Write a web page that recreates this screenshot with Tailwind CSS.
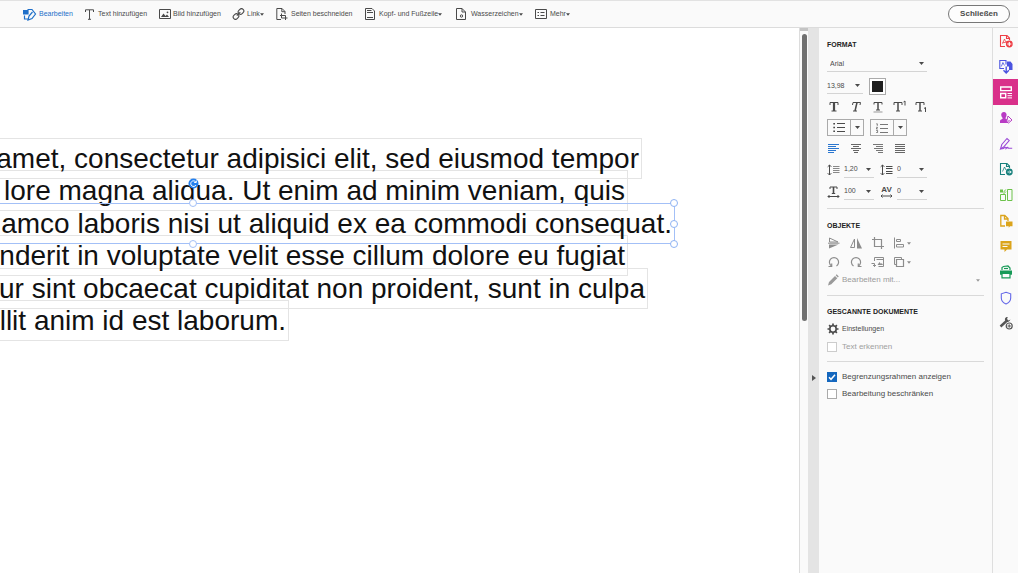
<!DOCTYPE html>
<html lang="de">
<head>
    <meta charset="UTF-8">
    <title>PDF bearbeiten</title>
    <script src="https://cdn.jsdelivr.net/npm/@tailwindcss/browser@4"></script>
</head>
<body class="h-screen flex flex-col overflow-hidden bg-white text-[#4a4a4a] font-['Liberation_Sans',Arial,sans-serif]">
<!-- Shared glyphs -->
<svg class="hidden">
    <symbol id="caret" viewBox="0 0 5 3"><path d="M0 0h5L2.500 3z" fill="currentColor"/></symbol>
</svg>

<!-- Toolbar -->
<header class="h-7 shrink-0 flex items-center justify-between bg-[#fafafa] border-t border-b border-t-[#e2e2e2] border-b-[#dcdcdc] pl-[23px] pr-2">
    <nav class="flex items-center text-[7px] leading-3 whitespace-nowrap">
        <button class="flex items-center gap-[2px] w-[62px] text-[#1f6fc9]">
            <svg class="w-[14px] h-[13px]" viewBox="0 0 14 13" fill="none" stroke="currentColor" stroke-width="1.200"><path d="M4.500 1.500H9l3.500 4.500L9 10.500 5 12l1-4 3.500-4M1.500 7.500v3.500H5"/><path d="M.5 2.500h4.500v3.500H.5z" fill="currentColor"/></svg>
            Bearbeiten
        </button>
        <button class="flex items-center gap-1 w-[74px]">
            <svg class="w-[9px] h-[11px]" viewBox="0 0 9 11" fill="none" stroke="currentColor"><path d="M.5 3V.8h8V3M4.500 1v9M3 10.300h3"/></svg>
            Text hinzufügen
        </button>
        <button class="flex items-center gap-[2px] w-[73px]">
            <svg class="w-3 h-[10px]" viewBox="0 0 12 10" fill="none" stroke="currentColor"><path d="M.5.5h11v9H.5z"/><path d="M2 8l2.500-3.500L6.500 7l1.500-1.500L10 8z" fill="currentColor" stroke="none"/><circle cx="8.500" cy="3.300" r=".9" fill="currentColor" stroke="none"/></svg>
            Bild hinzufügen
        </button>
        <button class="flex items-center gap-[2px] w-11">
            <svg class="w-[13px] h-3" viewBox="0 0 13 12" fill="none" stroke="currentColor" stroke-width="1.100"><rect x="6" y="1.200" width="6" height="4.600" rx="2.300" transform="rotate(-45 9 3.500)"/><rect x="1" y="6.200" width="6" height="4.600" rx="2.300" transform="rotate(-45 4 8.500)"/><path d="M4.800 7.700l3.500-3.500"/></svg>
            <span class="flex items-center">Link<svg class="w-1 h-[3px]"><use href="#caret"/></svg></span>
        </button>
        <button class="flex items-center gap-[3px] w-[89px]">
            <svg class="w-3 h-3" viewBox="0 0 12 12" fill="none" stroke="currentColor"><path d="M5 11.500H.8V.5H6L9 3.500V6M5.800.5v3.200H9M5.500 5.500v4.500h6M4 7.500h5.500V12"/></svg>
            Seiten beschneiden
        </button>
        <button class="flex items-center gap-1 w-[91px]">
            <svg class="w-[10px] h-3" viewBox="0 0 10 12" fill="none" stroke="currentColor"><path d="M.5.5H7L9.500 3v8.500h-9z"/><path d="M2 2.500h4.500M2 4.500h6M2 9.500h6"/></svg>
            <span class="flex items-center">Kopf- und Fußzeile<svg class="w-1 h-[3px]"><use href="#caret"/></svg></span>
        </button>
        <button class="flex items-center gap-[5px] w-[79px]">
            <svg class="w-[10px] h-3" viewBox="0 0 10 12" fill="none" stroke="currentColor"><path d="M.5.5H6L9.500 4v7.500h-9zM6 .5V4h3.500"/><circle cx="5.500" cy="8" r="1.200"/></svg>
            <span class="flex items-center">Wasserzeichen<svg class="w-1 h-[3px]"><use href="#caret"/></svg></span>
        </button>
        <button class="flex items-center gap-[3px]">
            <svg class="w-3 h-[10px]" viewBox="0 0 12 10" fill="none" stroke="currentColor"><path d="M.5.5h11v9H.5z"/><path d="M2.500 3.500H4M5.500 3.500h4M2.500 6.500H4M5.500 6.500h4"/></svg>
            <span class="flex items-center">Mehr<svg class="w-1 h-[3px]"><use href="#caret"/></svg></span>
        </button>
    </nav>
    <button class="h-[18px] w-[62px] rounded-full border border-[#777] bg-[#fdfdfd] text-[8px] leading-3 font-bold">Schließen</button>
</header>

<div class="flex-1 min-h-0 flex">
    <!-- Document page -->
    <main class="flex-1 min-w-0 overflow-hidden pt-[110px] text-[28px] leading-[39px] text-[#111] whitespace-nowrap">
        <p class="flex justify-end w-[642px] h-[41px] pr-[2px] border border-l-0 border-[#e4e4e4]"><span>amet, consectetur adipisici elit, sed eiusmod tempor</span></p>
        <p class="flex justify-end w-[628px] h-[41px] pr-[2px] -mt-[9px] border border-l-0 border-[#e4e4e4]"><span>lore magna aliqua. Ut enim ad minim veniam, quis</span></p>
        <div class="relative w-[675px] h-[41px] -mt-2 border border-l-0 border-[#a3c0f7]">
            <p class="flex justify-end pr-[2px]"><span>amco laboris nisi ut aliquid ex ea commodi consequat.</span></p>
            <span class="absolute left-[193px] -top-[17px] w-px h-[14px] bg-[#3b82e8]"></span>
            <svg class="absolute left-[188px] -top-[26px] w-[11px] h-[11px]" viewBox="0 0 11 11"><circle cx="5.500" cy="5.500" r="5" fill="#2580ee"/><path d="M7.800 4A2.800 2.800 0 1 0 8 7M8.300 2.500v2H6.200" fill="none" stroke="#fff"/></svg>
            <span class="absolute left-[189px] -top-[5px] w-2 h-2 rounded-full border border-[#a3c0f7] bg-white"></span>
            <span class="absolute left-[189px] -bottom-[5px] w-2 h-2 rounded-full border border-[#a3c0f7] bg-white"></span>
            <span class="absolute -right-[4px] -top-[5px] w-2 h-2 rounded-full border border-[#8fb3f3] bg-white"></span>
            <span class="absolute -right-[4px] top-4 w-2 h-2 rounded-full border border-[#8fb3f3] bg-white"></span>
            <span class="absolute -right-[4px] -bottom-[5px] w-2 h-2 rounded-full border border-[#8fb3f3] bg-white"></span>
        </div>
        <p class="flex justify-end w-[628px] h-[41px] pr-[2px] -mt-[9px] border border-l-0 border-[#e4e4e4]"><span>nderit in voluptate velit esse cillum dolore eu fugiat</span></p>
        <p class="flex justify-end w-[648px] h-[41px] pr-[2px] -mt-2 border border-l-0 border-[#e4e4e4]"><span>ur sint obcaecat cupiditat non proident, sunt in culpa</span></p>
        <p class="flex justify-end w-[289px] h-[41px] pr-[2px] -mt-[9px] border border-l-0 border-[#e4e4e4]"><span>llit anim id est laborum.</span></p>
    </main>

    <!-- Scrollbar and panel handle -->
    <div class="w-[9px] shrink-0 flex flex-col items-center bg-[#fafafa] border-l border-[#dcdcdc]">
        <div class="w-full h-[3px] bg-[#c4c4c4]"></div>
        <div class="w-[5px] h-[287px] mt-[3px] rounded-full bg-[#707070]"></div>
    </div>
    <button aria-label="Bereich ausblenden" class="w-[11px] shrink-0 flex justify-center items-start pt-[347px] bg-[#e4e4e4]">
        <svg class="w-1 h-[6px]" viewBox="0 0 4 6"><path d="M0 0l4 3-4 3z" fill="#555"/></svg>
    </button>

    <!-- Format panel -->
    <aside class="w-[173px] shrink-0 bg-[#fafafa] pt-3 pl-2 pr-2 text-[8px] leading-3">
        <h2 class="text-[7px] leading-[10px] font-bold text-[#222]">FORMAT</h2>
        <div class="flex items-center w-[100px] h-4 mt-[6px] pl-[3px] pr-[3px] border-b border-[#d4d4d4] text-[7px]">
            <select aria-label="Schriftart" class="appearance-none flex-1 min-w-0"><option>Arial</option></select>
            <svg class="w-[5px] h-[3px]"><use href="#caret"/></svg>
        </div>
        <div class="flex gap-[6px] mt-[6px]">
            <div class="flex items-center w-9 h-4 pr-[3px] border-b border-[#d4d4d4] text-[7px]">
                <select aria-label="Schriftgrad" class="appearance-none flex-1 min-w-0"><option>13,98</option></select>
                <svg class="w-[5px] h-[3px]"><use href="#caret"/></svg>
            </div>
            <button aria-label="Schriftfarbe" class="w-[17px] h-[17px] border border-[#aaa] bg-white p-[2px]"><span class="block w-full h-full bg-[#1e1e1e]"></span></button>
        </div>

        <div class="flex gap-2 mt-[5px] h-[13px]">
            <button aria-label="Fett" class="w-[14px]"><svg viewBox="0 0 14 13" fill="none" stroke="currentColor"><path d="M3 5V2.500h8V5M4.500 11h5"/><path d="M7 2.500v8.500" stroke-width="2.200"/></svg></button>
            <button aria-label="Kursiv" class="w-[14px]"><svg viewBox="0 0 14 13" fill="none" stroke="currentColor"><path d="M3.500 5l.5-2.500h7.500L11 5M4 11h4"/><path d="M8 2.500L6 11" stroke-width="1.500"/></svg></button>
            <button aria-label="Unterstrichen" class="w-[14px]"><svg viewBox="0 0 14 13" fill="none" stroke="currentColor"><path d="M3 4.500v-2h8v2M5 10h4"/><path d="M7 2.500V10" stroke-width="1.500"/><path d="M2.500 12h9" stroke="#999"/></svg></button>
            <button aria-label="Hochgestellt" class="w-[14px]"><svg viewBox="0 0 14 13" fill="none" stroke="currentColor"><path d="M1 5V2.500h8V5M3 11h4M10.500 2L12 1v4.500"/><path d="M5 2.500V11" stroke-width="1.500"/></svg></button>
            <button aria-label="Tiefgestellt" class="w-[14px]"><svg viewBox="0 0 14 13" fill="none" stroke="currentColor"><path d="M1 5V2.500h8V5M3 11h4M9 8.500l1.500-1V12"/><path d="M5 2.500V11" stroke-width="1.500"/></svg></button>
        </div>

        <div class="flex gap-[6px] mt-[6px]">
            <div class="flex w-[37px] h-[17px] border border-[#aaa]">
                <button aria-label="Aufzählung" class="flex-1 flex items-center justify-center"><svg class="w-3 h-[9px]" viewBox="0 0 12 9" fill="none" stroke="currentColor"><path d="M4 .5h8M4 4.500h8M4 8.500h8"/><path d="M.3.800H2M.3 4.500H2M.3 8.200H2" stroke-width="1.600"/></svg></button>
                <button aria-label="Aufzählungsart" class="w-[13px] flex items-center justify-center border-l border-[#aaa]"><svg class="w-[5px] h-[3px]"><use href="#caret"/></svg></button>
            </div>
            <div class="flex w-[37px] h-[17px] border border-[#aaa]">
                <button aria-label="Nummerierung" class="flex-1 flex items-center justify-center"><svg class="w-3 h-[10px]" viewBox="0 0 12 10" fill="none" stroke="currentColor"><path d="M4 1.500h8M4 5.500h8M4 9.500h8" stroke="#777"/><path d="M.3.800h1v2M.2 4.300h1.300L.3 6h1.400M.2 7.500h1.400v2H.2" stroke-width=".7"/></svg></button>
                <button aria-label="Nummerierungsart" class="w-[13px] flex items-center justify-center border-l border-[#aaa]"><svg class="w-[5px] h-[3px]"><use href="#caret"/></svg></button>
            </div>
        </div>

        <div class="flex gap-2 mt-[6px] h-3">
            <button aria-label="Linksbündig" class="w-[14px]"><svg viewBox="0 0 14 12" stroke="#2a76cf"><path d="M1 2.500h11M1 4.500h8M1 6.500h11M1 8.500h8M1 10.500h6"/></svg></button>
            <button aria-label="Zentriert" class="w-[14px]"><svg viewBox="0 0 14 12" stroke="#666"><path d="M2 2.500h10M4 4.500h6M2 6.500h10M4 8.500h6M5 10.500h4"/></svg></button>
            <button aria-label="Rechtsbündig" class="w-[14px]"><svg viewBox="0 0 14 12" stroke="#777"><path d="M2 2.500h10M5 4.500h7M3 6.500h9M5 8.500h7M7 10.500h5"/></svg></button>
            <button aria-label="Blocksatz" class="w-[14px]"><svg viewBox="0 0 14 12" stroke="#666"><path d="M2 2.500h10M2 4.500h10M2 6.500h10M2 8.500h10M2 10.500h10"/></svg></button>
        </div>

        <div class="grid grid-cols-[47px_47px] gap-x-[6px] gap-y-[5px] mt-[7px] text-[7px]">
            <label class="flex items-center gap-1 h-[17px]">
                <svg class="w-[13px] h-3" viewBox="0 0 13 12" fill="none" stroke="currentColor"><path d="M2.500 1v10M.7 2.800L2.500 1l1.800 1.800M.7 9.200L2.500 11l1.800-1.800"/><path d="M6 2.500h6.500M6 4.500h6.500M6 6.500h6.500M6 8.500h6.500" stroke="#888"/></svg>
                <span class="flex items-center w-[30px] h-full pr-[3px] border-b border-[#d4d4d4]"><select aria-label="Zeilenabstand" class="appearance-none flex-1 min-w-0"><option>1,20</option></select><svg class="w-[5px] h-[3px]"><use href="#caret"/></svg></span>
            </label>
            <label class="flex items-center gap-1 h-[17px]">
                <svg class="w-[13px] h-3" viewBox="0 0 13 12" fill="none" stroke="currentColor"><path d="M2.500 1v10M.7 2.800L2.500 1l1.800 1.800M.7 9.200L2.500 11l1.800-1.800"/><path d="M6 2.500h6.500M6 4.500h6.500M6 7.500h6.500M6 9.500h6.500"/></svg>
                <span class="flex items-center w-[30px] h-full pr-[3px] border-b border-[#d4d4d4]"><select aria-label="Absatzabstand" class="appearance-none flex-1 min-w-0"><option>0</option></select><svg class="w-[5px] h-[3px]"><use href="#caret"/></svg></span>
            </label>
            <label class="flex items-center gap-1 h-[17px]">
                <svg class="w-[13px] h-3" viewBox="0 0 13 12" fill="none" stroke="currentColor"><path d="M3 3V1h7v2M4.800 7.500h3.400"/><path d="M6.500 1v6.500" stroke-width="1.600"/><path d="M1 10.500h11M2.500 9L1 10.500 2.500 12M10.500 9l1.500 1.500-1.500 1.500"/></svg>
                <span class="flex items-center w-[30px] h-full pr-[3px] border-b border-[#d4d4d4]"><select aria-label="Horizontale Skalierung" class="appearance-none flex-1 min-w-0"><option>100</option></select><svg class="w-[5px] h-[3px]"><use href="#caret"/></svg></span>
            </label>
            <label class="flex items-center gap-1 h-[17px]">
                <span class="w-[13px] h-3 flex flex-col items-center">
                    <span class="text-[8px] leading-[8px] font-bold">AV</span>
                    <svg class="w-[13px] h-1" viewBox="0 0 13 4" fill="none" stroke="currentColor"><path d="M1 2h11M2.500.5L1 2l1.500 1.500M10.500.5L12 2l-1.500 1.500"/></svg>
                </span>
                <span class="flex items-center w-[30px] h-full pr-[3px] border-b border-[#d4d4d4]"><select aria-label="Zeichenabstand" class="appearance-none flex-1 min-w-0"><option>0</option></select><svg class="w-[5px] h-[3px]"><use href="#caret"/></svg></span>
            </label>
        </div>

        <hr class="mt-2 border-[#d9d9d9]">

        <!-- Objects -->
        <h2 class="mt-3 text-[7px] leading-[10px] font-bold text-[#222]">OBJEKTE</h2>
        <div class="grid grid-cols-[14px_14px_14px_18px] gap-x-2 gap-y-[7px] mt-[6px] text-[#8c8c8c]">
            <button aria-label="Vertikal spiegeln" class="h-3"><svg class="w-[14px] h-3" viewBox="0 0 14 12" fill="none" stroke="currentColor"><path d="M2.500 1v4H11zM1 6.200h11.500"/><path d="M2 7.500h9.500L2 11.500z" fill="currentColor" stroke="none"/></svg></button>
            <button aria-label="Horizontal spiegeln" class="h-3"><svg class="w-[14px] h-3" viewBox="0 0 14 12" fill="none" stroke="currentColor"><path d="M5.500 2v8.500h-4z"/><path d="M8 1v10.500h5z" fill="currentColor" stroke="none"/></svg></button>
            <button aria-label="Zuschneiden" class="h-3"><svg class="w-[14px] h-3" viewBox="0 0 14 12" fill="none" stroke="currentColor" stroke-width="1.200"><path d="M3.500 0v9.500H13M1 2.500h9.500V12"/></svg></button>
            <button aria-label="Ausrichten" class="h-3 flex items-center gap-[2px]"><svg class="w-3 h-3" viewBox="0 0 12 12" fill="none" stroke="currentColor"><path d="M1.500.5v11M3.500 2.500h4v2h-4zM3.500 7.500h7v2.500h-7z"/></svg><svg class="w-1 h-[3px]"><use href="#caret"/></svg></button>
            <button aria-label="Nach links drehen" class="h-3"><svg class="w-[14px] h-3" viewBox="0 0 14 12" fill="none" stroke="currentColor" stroke-width="1.200"><path d="M4.500 10A4.600 4.600 0 1 1 9.500 10"/><path d="M1.500 10.500h3.200V7.500"/></svg></button>
            <button aria-label="Nach rechts drehen" class="h-3"><svg class="w-[14px] h-3" viewBox="0 0 14 12" fill="none" stroke="currentColor" stroke-width="1.200"><path d="M4.500 10A4.600 4.600 0 1 1 9.500 10"/><path d="M12.500 10.500H9.300V7.500"/></svg></button>
            <button aria-label="Bild ersetzen" class="h-3"><svg class="w-[14px] h-3" viewBox="0 0 14 12" fill="none" stroke="currentColor"><path d="M3.500 5V1.500h9v7M5.500 3.500h7v7h-5M.5 7.500h3v3M2 9l1.500 1.500L5 9"/><path d="M6.500 9l2-3 1.500 2 .8-1 1.200 2z" fill="currentColor" stroke="none"/></svg></button>
            <button aria-label="Anordnen" class="h-3 flex items-center gap-[2px]"><svg class="w-3 h-3" viewBox="0 0 12 12" fill="none" stroke="currentColor"><path d="M3 8.500H1.500v-7h7V3"/><path d="M3.500 3.500h7v7h-7z" stroke-width="1.200"/></svg><svg class="w-1 h-[3px]"><use href="#caret"/></svg></button>
        </div>
        <div class="flex items-center gap-[3px] h-[14px] mt-[5px] pr-1 text-[#9a9a9a]">
            <svg class="w-3 h-3" viewBox="0 0 12 12" fill="currentColor"><path d="M1 11.500l1-3.500L8 2l2.300 2.300-6 6zM8.700 1.300l1-1 2.100 2.200-1 1z"/></svg>
            <select aria-label="Bearbeiten mit" class="appearance-none flex-1 min-w-0"><option>Bearbeiten mit...</option></select>
            <svg class="w-1 h-[3px]"><use href="#caret"/></svg>
        </div>

        <hr class="mt-2 border-[#d9d9d9]">

        <!-- Scanned documents -->
        <h2 class="mt-[11px] text-[7px] leading-[10px] font-bold text-[#222]">GESCANNTE DOKUMENTE</h2>
        <button class="flex items-center gap-[3px] h-3 mt-[6px] text-[7px]">
            <svg class="w-3 h-3" viewBox="0 0 12 12" fill="none" stroke="currentColor"><circle cx="6" cy="6" r="3.200" stroke-width="1.600"/><path d="M6 .5v2M6 9.500v2M.5 6h2M9.500 6h2M2.100 2.100l1.400 1.400M8.500 8.500l1.400 1.400M9.900 2.100L8.500 3.500M3.500 8.500L2.100 9.900" stroke-width="1.700"/></svg>
            Einstellungen
        </button>
        <label class="flex items-center gap-[5px] h-3 mt-[6px] text-[#a0a0a0]">
            <input type="checkbox" disabled class="appearance-none w-[10px] h-[10px] border border-[#ccc] bg-white">
            Text erkennen
        </label>

        <hr class="mt-2 border-[#d9d9d9]">

        <label class="flex items-center gap-[5px] h-3 mt-[9px]">
            <span class="grid w-[10px] h-[10px]">
                <input type="checkbox" checked class="peer appearance-none col-start-1 row-start-1 w-[10px] h-[10px] border border-[#aaa] bg-white checked:bg-[#1467be] checked:border-[#1467be]">
                <svg class="hidden peer-checked:block col-start-1 row-start-1 w-[10px] h-[10px] pointer-events-none" viewBox="0 0 10 10" fill="none" stroke="#fff" stroke-width="1.500"><path d="M2 5.300l2 2L8 2.800"/></svg>
            </span>
            Begrenzungsrahmen anzeigen
        </label>
        <label class="flex items-center gap-[5px] h-3 mt-[5px]">
            <input type="checkbox" class="appearance-none w-[10px] h-[10px] border border-[#aaa] bg-white">
            Bearbeitung beschränken
        </label>
    </aside>

    <!-- Tool rail -->
    <nav class="w-[26px] shrink-0 bg-[#fafafa] border-l border-[#dedede]">
        <div class="h-[308px] flex flex-col *:flex-1 *:flex *:items-center *:justify-center">
            <button aria-label="PDF erstellen" class="text-[#ee3f46]"><svg class="w-[14px] h-[14px]" viewBox="0 0 14 14" fill="none" stroke="currentColor" stroke-width="1.100"><path d="M6 12.500H1.500v-11H8L10.500 4v2M7.500 1.500v3h3"/><path d="M3.500 9.500l2-4.500 1 2.500 2 .5-5 .8" stroke-width=".8"/><circle cx="10.300" cy="10" r="3.400" fill="currentColor" stroke="none"/><path d="M10.300 8v4M8.300 10h4" stroke="#fff"/></svg></button>
            <button aria-label="PDF exportieren" class="text-[#4b54e0]"><svg class="w-[14px] h-[14px]" viewBox="0 0 14 14" fill="none" stroke="currentColor" stroke-width="1.100"><path d="M5 8.500H.8v-8H7v4"/><path d="M2.300 6.500l1.600-4 1.600 3" stroke-width=".8"/><path d="M8 1.500h3.500L13.500 4v6H10V6.500H8z" fill="currentColor" stroke="none"/><path d="M7.200 6.500V13M4.500 10.300L7.200 13l2.700-2.700" stroke-width="1.400"/></svg></button>
            <button aria-label="PDF bearbeiten" class="bg-[#d9308a] text-white"><svg class="w-3 h-[13px]" viewBox="0 0 12 13" fill="none" stroke="currentColor" stroke-width="1.400"><path d="M.7 1h10.600v3.600H.7zM.7 7.500h5v4.300h-5z"/><path d="M7.500 7.500H12M7.500 9.700H12M7.500 11.900H12" stroke-width="1"/></svg></button>
            <button aria-label="Signaturen anfordern" class="text-[#b83bc4]"><svg class="w-[14px] h-[14px]" viewBox="0 0 14 14"><path d="M5 1a2.700 2.700 0 0 1 2.500 3.500C7.300 6 6.500 6.500 6.500 7.500L8 8.500V12H1v-2c0-1.500 2.500-1.500 2.700-2.500C3.700 6.500 2.500 6 2.300 4.500A2.700 2.700 0 0 1 5 1z" fill="currentColor"/><path d="M9 5l4 4-3.500 3-2-1z" fill="#fafafa" stroke="currentColor"/><path d="M8.500 11l2-2" stroke="currentColor"/></svg></button>
            <button aria-label="Ausfüllen und unterschreiben" class="text-[#9b4bd6]"><svg class="w-[14px] h-[14px]" viewBox="0 0 14 14" fill="none" stroke="currentColor" stroke-width="1.100"><path d="M1.500 12l1.300-4.500L8 1.500l2.200 2L5 9.700zM1.500 12l3-.5c2-2 2.500-1.500 2.500 0 1.500-1.500 2-1.500 2.200-.2h4"/></svg></button>
            <button aria-label="Seiten organisieren" class="text-[#17807c]"><svg class="w-[14px] h-[14px]" viewBox="0 0 14 14" fill="none" stroke="currentColor" stroke-width="1.100"><path d="M6 12.500H1.500v-11H8L10.500 4v2M7.500 1.500v3h3"/><path d="M3.500 9.500l2-4.500 1.500 3" stroke-width=".8"/><circle cx="10.300" cy="10" r="3.400" fill="currentColor" stroke="none"/><path d="M8.500 10h3.600M10.800 8.600l1.400 1.400-1.400 1.400" stroke="#fff" stroke-width=".9"/></svg></button>
            <button aria-label="Dateien vergleichen" class="text-[#6cc24a]"><svg class="w-[14px] h-[14px]" viewBox="0 0 14 14" fill="none" stroke="currentColor"><path d="M8.500 1.500H13v11H8.500zM1.500 6.500h5v6h-5z"/><path d="M1 1.500h3v3H1z" fill="currentColor" stroke="none"/><path d="M6.800 1.500l-2.500 3M4 6.500l3-3"/></svg></button>
            <button aria-label="Datei senden" class="text-[#dba41c]"><svg class="w-[14px] h-[14px]" viewBox="0 0 14 14" fill="none" stroke="currentColor" stroke-width="1.300"><path d="M6 12H1.800V1.500h4L9 4.500V7M5.500 1.500V5H9"/><path d="M7 7.500h6.500v4.800H11l-1.300 1.400v-1.400H7z" fill="currentColor" stroke="none"/></svg></button>
            <button aria-label="Kommentieren" class="text-[#dba41c]"><svg class="w-[14px] h-[14px]" viewBox="0 0 14 14"><path d="M1.500 2h11v8.500H8L5.500 13v-2.500h-4z" fill="currentColor"/><path d="M3.500 5h7M3.500 7.500h5" stroke="#fafafa"/></svg></button>
            <button aria-label="Scannen und OCR" class="text-[#169a57]"><svg class="w-[14px] h-[14px]" viewBox="0 0 14 14" fill="none" stroke="currentColor" stroke-width="1.200"><path d="M3 5V2.500l1.500-1L9 1l2 2v2"/><path d="M1 5.500h12v4.200H1z" fill="currentColor" stroke="none"/><path d="M3 8.500h8v4.300H3z" fill="#fafafa"/><path d="M5 3.500h4"/></svg></button>
            <button aria-label="Schützen" class="text-[#6468e8]"><svg class="w-[14px] h-[14px]" viewBox="0 0 14 14" fill="none" stroke="currentColor" stroke-width="1.100"><path d="M7 1.300l4.700 1.500V7c0 3-2 4.800-4.700 6C4.300 11.800 2.300 10 2.300 7V2.800z"/></svg></button>
            <button aria-label="Weitere Werkzeuge" class="text-[#555]"><svg class="w-[14px] h-[14px]" viewBox="0 0 14 14" fill="none" stroke="currentColor"><path d="M1.500 10.500l6-5.500" stroke-width="2.400"/><path d="M11.500 3.500l-2 1-1.500-1.500.8-2C6 1 5.500 3 6.300 5c.7 1.500 3.500 1.700 5.200-1.500z" fill="currentColor" stroke="none"/><circle cx="10.200" cy="10" r="3" fill="#fafafa" stroke-width="1.200"/><path d="M10.200 8.300v3.400M8.500 10h3.400"/></svg></button>
        </div>
    </nav>
</div>
</body>
</html>
